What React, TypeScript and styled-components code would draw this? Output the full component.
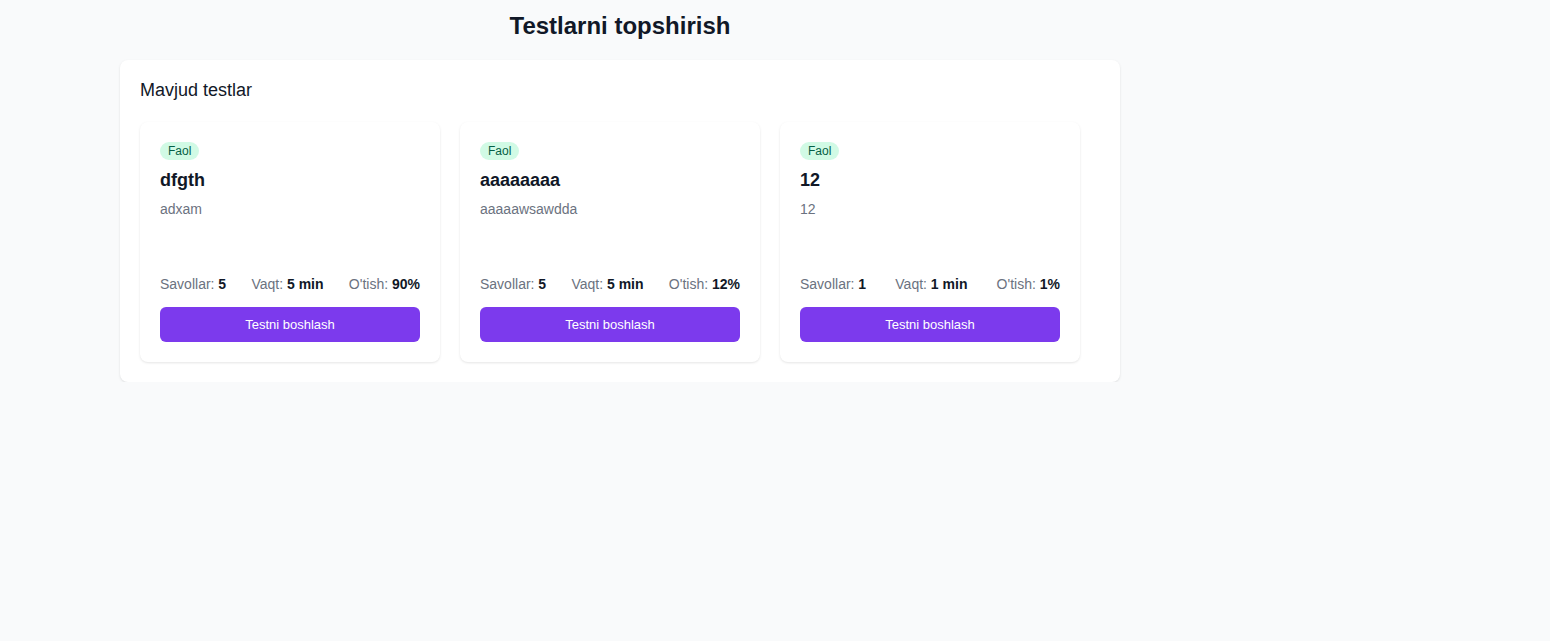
import React from "react";
import styled, { createGlobalStyle } from "styled-components";

const Global = createGlobalStyle`
  html, body { margin: 0; padding: 0; background: #f9fafb; }
  body { font-family: "Liberation Sans", Arial, sans-serif; color: #111827; }
  * { box-sizing: border-box; }
`;

const Page = styled.div`
  width: 1000px;
  margin-left: 120px;
  padding-top: 10px;
`;

const Title = styled.h1`
  margin: 0 0 18px;
  font-size: 24px;
  line-height: 32px;
  font-weight: 700;
  text-align: center;
  color: #111827;
`;

const Panel = styled.section`
  background: #fff;
  border-radius: 8px;
  box-shadow: 0 1px 3px rgba(0, 0, 0, 0.08), 0 1px 2px rgba(0, 0, 0, 0.04);
  padding: 20px;
`;

const PanelTitle = styled.h2`
  margin: 0 0 22px;
  font-size: 18px;
  line-height: 20px;
  font-weight: 400;
  color: #111827;
`;

const Grid = styled.div`
  display: grid;
  grid-template-columns: repeat(3, 300px);
  gap: 20px;
`;

const Card = styled.div`
  background: #fff;
  border-radius: 8px;
  box-shadow: 0 1px 3px rgba(0, 0, 0, 0.08), 0 1px 2px rgba(0, 0, 0, 0.03);
  padding: 20px;
  height: 240px;
  display: flex;
  flex-direction: column;
`;

const Badge = styled.span`
  align-self: flex-start;
  background: #d1fae5;
  color: #065f46;
  font-size: 12px;
  line-height: 14px;
  padding: 2px 8px;
  border-radius: 9999px;
`;

const CardTitle = styled.h3`
  margin: 8px 0 0;
  font-size: 18px;
  line-height: 24px;
  font-weight: 700;
  color: #111827;
`;

const Desc = styled.p`
  margin: 7px 0 0;
  font-size: 14px;
  line-height: 20px;
  color: #6b7280;
  flex: 1;
`;

const Stats = styled.div`
  display: flex;
  justify-content: space-between;
  font-size: 14px;
  line-height: 20px;
  color: #6b7280;
  margin-bottom: 13px;
`;

const Value = styled.b`
  color: #111827;
  font-weight: 700;
`;

const Button = styled.button`
  height: 35px;
  width: 100%;
  border: none;
  border-radius: 6px;
  background: #7c3aed;
  color: #fff;
  font-family: inherit;
  font-size: 13px;
  font-weight: 500;
  cursor: pointer;
`;

const tests = [
  { title: "dfgth", desc: "adxam", q: 5, t: 5, p: 90 },
  { title: "aaaaaaaa", desc: "aaaaawsawdda", q: 5, t: 5, p: 12 },
  { title: "12", desc: "12", q: 1, t: 1, p: 1 },
];

export default function App() {
  return (
    <>
      <Global />
      <Page>
        <Title>Testlarni topshirish</Title>
        <Panel>
          <PanelTitle>Mavjud testlar</PanelTitle>
          <Grid>
            {tests.map((t) => (
              <Card key={t.title}>
                <Badge>Faol</Badge>
                <CardTitle>{t.title}</CardTitle>
                <Desc>{t.desc}</Desc>
                <Stats>
                  <span>
                    Savollar: <Value>{t.q}</Value>
                  </span>
                  <span>
                    Vaqt: <Value>{t.t} min</Value>
                  </span>
                  <span>
                    O'tish: <Value>{t.p}%</Value>
                  </span>
                </Stats>
                <Button>Testni boshlash</Button>
              </Card>
            ))}
          </Grid>
        </Panel>
      </Page>
    </>
  );
}
